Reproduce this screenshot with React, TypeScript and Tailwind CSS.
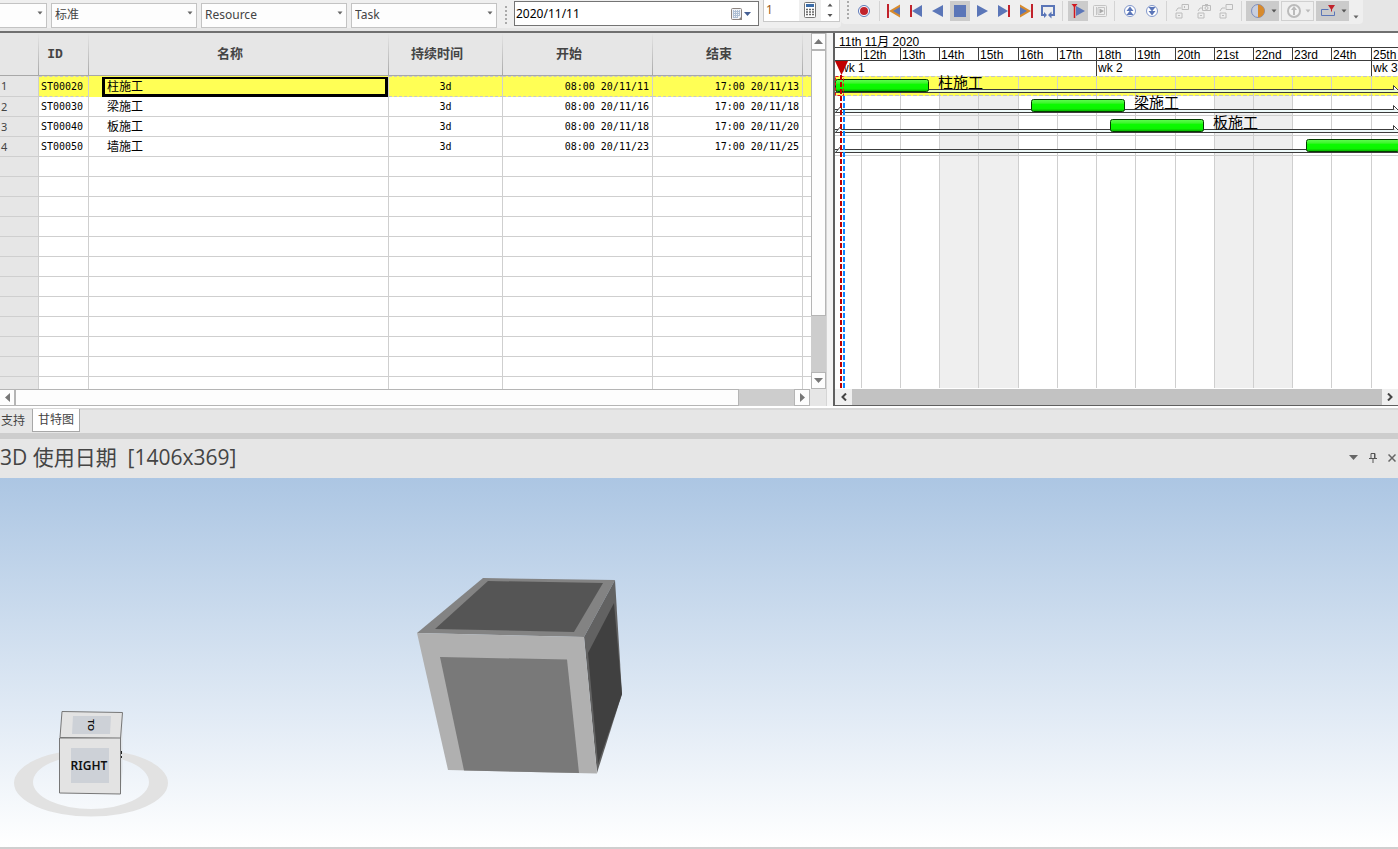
import type { ReactNode } from "react";

type Task = {
  id: string;
  name: string;
  duration: string;
  start: string;
  end: string;
  barX: number;
};

const TASKS: Task[] = [
  { id: "ST00020", name: "柱施工", duration: "3d", start: "08:00 20/11/11", end: "17:00 20/11/13", barX: 0 },
  { id: "ST00030", name: "梁施工", duration: "3d", start: "08:00 20/11/16", end: "17:00 20/11/18", barX: 196 },
  { id: "ST00040", name: "板施工", duration: "3d", start: "08:00 20/11/18", end: "17:00 20/11/20", barX: 275 },
  { id: "ST00050", name: "墙施工", duration: "3d", start: "08:00 20/11/23", end: "17:00 20/11/25", barX: 471 },
];

const DAYS = [
  { label: "12th", x: 26, width: "w-[39px]" },
  { label: "13th", x: 65, width: "w-[39px]" },
  { label: "14th", x: 104, width: "w-[39px]" },
  { label: "15th", x: 143, width: "w-[40px]" },
  { label: "16th", x: 183, width: "w-[39px]" },
  { label: "17th", x: 222, width: "w-[39px]" },
  { label: "18th", x: 261, width: "w-[39px]" },
  { label: "19th", x: 300, width: "w-[40px]" },
  { label: "20th", x: 340, width: "w-[39px]" },
  { label: "21st", x: 379, width: "w-[39px]" },
  { label: "22nd", x: 418, width: "w-[39px]" },
  { label: "23rd", x: 457, width: "w-[39px]" },
  { label: "24th", x: 496, width: "w-[40px]" },
  { label: "25th", x: 536, width: "w-[39px]" },
];

const BAR_WIDTH = 94;
const LAST_LABEL_X = 440;
const EMPTY_ROWS = Array.from({ length: 11 }, (_, i) => i);

const BLUE = "#5b76b8";
const RED = "#c1222b";
const ORANGE = "#d78a2c";

function Select({ label, value, className }: { label: string; value: string; className: string }) {
  return (
    <label className={`relative block h-[25px] ${className}`}>
      <select
        aria-label={label}
        className="h-full w-full appearance-none border border-[#c3c3c3] bg-[#fdfdfd] pl-[3px] text-xs text-[#444]"
      >
        <option>{value}</option>
      </select>
      <svg className="pointer-events-none absolute right-1 top-2.5 h-1 w-1.5" viewBox="0 0 6 4">
        <path d="M0.5 0.5h5L3 3.5z" fill="#666" />
      </svg>
    </label>
  );
}

function Grip() {
  return (
    <svg className="h-[18px] w-0.5 shrink-0" viewBox="0 0 2 18" fill="#aaa">
      {[0, 4, 8, 12, 16].map((y) => (
        <rect key={y} y={y} width="2" height="2" />
      ))}
    </svg>
  );
}

function Separator({ className }: { className: string }) {
  return <div className={`h-5 w-px shrink-0 bg-[#d4d4d4] ${className}`} />;
}

function ToolButton({ label, active, children }: { label: string; active?: boolean; children: ReactNode }) {
  return (
    <button
      type="button"
      aria-label={label}
      className={`flex h-5 w-5 shrink-0 items-center justify-center ${active ? "bg-[#cbcbcb]" : ""}`}
    >
      <svg className="h-4 w-4" viewBox="0 0 16 16" fill="none">
        {children}
      </svg>
    </button>
  );
}

function MenuButton({ label, className, children }: { label: string; className: string; children: ReactNode }) {
  return (
    <button
      type="button"
      aria-label={label}
      className={`flex h-5 w-[33px] shrink-0 items-center justify-between pl-1 pr-0.5 ${className}`}
    >
      <svg className="h-4 w-4" viewBox="0 0 16 16" fill="none">
        {children}
      </svg>
      <svg className="h-1 w-1.5" viewBox="0 0 6 4">
        <path d="M0.5 0.5h5L3 3.5z" fill={label === "Speed" ? "#bbb" : "#555"} />
      </svg>
    </button>
  );
}

function Toolbar() {
  return (
    <div className="flex h-[31px] items-start overflow-hidden bg-[#e6e6e6]">
      <div className="flex h-7 min-w-0 flex-[841] gap-1 rounded-br bg-[#efefef] pt-px">
        <Select label="Filter" value="" className="-ml-1 w-[51px]" />
        <Select label="Layout" value="标准" className="w-[146px]" />
        <Select label="Group" value="Resource" className="w-[146px]" />
        <Select label="Code" value="Task" className="w-[146px]" />
        <div className="flex items-center pl-1">
          <Grip />
        </div>
        <div className="ml-[3px] flex h-[25px] w-[245px] items-center border border-[#747474] bg-white pr-1.5">
          <input
            aria-label="Current date"
            defaultValue="2020/11/11"
            className="min-w-0 flex-1 pl-px text-xs text-black outline-none"
          />
          <svg className="h-[14px] w-[22px]" viewBox="0 0 22 14" fill="none">
            <rect x="1.5" y="1.5" width="10" height="11" rx="1" fill="#f2f4f8" stroke="#8c8480" />
            <path d="M3.5 3v8M5.5 3v8M7.5 3v8M9.5 3v6M3 4.5h7M3 6.5h7M3 8.5h7M3 10.5h5" stroke="#aebfd4" />
            <path d="M12 9v4H8z" fill="#8c8480" />
            <path d="M14 5h7l-3.500 4z" fill="#455f93" />
          </svg>
        </div>
        <div className="-mt-1 flex h-[25px] w-[77px] border border-[#c9c9c9] bg-white">
          <input
            aria-label="Step"
            defaultValue="1"
            className="min-w-0 flex-1 pl-0.5 text-xs text-[#9a5a20] outline-none"
          />
          <div className="flex w-[22px] items-center justify-center bg-[#efefef]">
            <svg className="h-4 w-3" viewBox="0 0 12 16" fill="none">
              <rect x="0.5" y="0.5" width="11" height="15" rx="1" fill="#fff" stroke="#777" />
              <rect x="2" y="2" width="8" height="3" fill="#3c6ca8" />
              <path d="M2 7.500h8M2 10h8M2 12.500h8" stroke="#666" strokeWidth="1.500" strokeDasharray="2 1" />
            </svg>
          </div>
          <div className="flex w-[18px] items-center justify-center">
            <svg className="h-4 w-1.5" viewBox="0 0 6 16" fill="#555">
              <path d="M0.500 4.500h5L3 1.500zM0.500 12h5L3 15z" />
            </svg>
          </div>
        </div>
      </div>

      <div className="flex h-6 min-w-0 flex-[557] items-center">
        <div className="flex h-6 items-start rounded-b bg-[#efefef] pl-1.5 pt-px">
          <Grip />
          <div className="ml-[5px] flex">
            <ToolButton label="Record">
              <circle cx="8" cy="8" r="5.500" fill="#fff" stroke={BLUE} />
              <circle cx="8" cy="8" r="4" fill={RED} />
            </ToolButton>
          </div>
          <Separator className="ml-[5px] mr-1" />
          <div className="flex gap-0.5">
            <ToolButton label="First">
              <path d="M2 1v14" stroke={RED} strokeWidth="2" />
              <path d="M3 8l11-6.500v13z" fill={ORANGE} />
              <path d="M7 8l7-4v8z" fill={BLUE} />
            </ToolButton>
            <ToolButton label="Step back">
              <path d="M3 2v12" stroke={RED} strokeWidth="2" />
              <path d="M4 8l10-6v12z" fill={BLUE} />
            </ToolButton>
            <ToolButton label="Play backwards">
              <path d="M2 8l11-6v12z" fill={BLUE} />
            </ToolButton>
            <ToolButton label="Stop" active>
              <rect x="2" y="2" width="12" height="12" fill={BLUE} />
            </ToolButton>
            <ToolButton label="Play">
              <path d="M14 8L3 2v12z" fill={BLUE} />
            </ToolButton>
            <ToolButton label="Step forward">
              <path d="M13 2v12" stroke={RED} strokeWidth="2" />
              <path d="M12 8L2 2v12z" fill={BLUE} />
            </ToolButton>
            <ToolButton label="Last">
              <path d="M14 1v14" stroke={RED} strokeWidth="2" />
              <path d="M13 8L2 1.500v13z" fill={ORANGE} />
              <path d="M9 8L2 4v8z" fill={BLUE} />
            </ToolButton>
            <ToolButton label="Loop">
              <path d="M5 12H2V3h12v9h-3" stroke={BLUE} strokeWidth="2" />
              <path d="M11.500 8.500v7L8 12zM4 9l3 3-3 3z" fill={BLUE} />
            </ToolButton>
          </div>
          <Separator className="mx-1" />
          <div className="ml-px flex gap-0.5">
            <ToolButton label="Follow date" active>
              <path d="M15 8L6 3v10z" fill={BLUE} />
              <path d="M4.500 1v14" stroke="#d01820" strokeWidth="1.500" />
              <path d="M1.500 1h6L4.500 4.500z" fill="#d01820" />
            </ToolButton>
            <ToolButton label="Preview">
              <rect x="1.500" y="2.500" width="13" height="11" rx="1" stroke="#c4c4c4" />
              <path d="M4.500 4v8M6 4.500h6.500v7H6z" stroke="#c4c4c4" />
              <path d="M7.500 5.500L12 8l-4.500 2.500z" fill="#a8a8a8" />
            </ToolButton>
          </div>
          <Separator className="ml-1 mr-[5px]" />
          <div className="flex gap-0.5">
            <ToolButton label="Raise">
              <circle cx="8" cy="8" r="5.500" fill="#fff" stroke="#8298cc" />
              <path d="M8 3.500L4.500 8h7zM8 7.500L4.500 12h7z" fill={BLUE} />
            </ToolButton>
            <ToolButton label="Lower">
              <circle cx="8" cy="8" r="5.500" fill="#fff" stroke="#8298cc" />
              <path d="M8 8.500L4.500 4h7zM8 12.500L4.500 8h7z" fill={BLUE} />
            </ToolButton>
          </div>
          <Separator className="ml-1 mr-[5px]" />
          <div className="flex gap-0.5">
            <ToolButton label="Play camera">
              <path d="M2 10h6v5H2zM2 8l2-3h3M8 1.500h6.500v5H8zM10.500 3v2M4 12.500h2" stroke="#bcbcbc" />
            </ToolButton>
            <ToolButton label="Capture camera">
              <path d="M2 10h6v5H2zM2 8l2-3h2M6.500 2.500h8v5h-8zM9 1.500h3M4 12.500h2" stroke="#bcbcbc" />
              <circle cx="10.500" cy="5" r="1.500" stroke="#bcbcbc" />
            </ToolButton>
            <ToolButton label="Clear camera">
              <path d="M2 10h6v5H2zM2 8l2-3h3M8 1.500h6.500v5H8zM4 12.500h2" stroke="#bcbcbc" />
            </ToolButton>
          </div>
          <Separator className="ml-[5px] mr-1" />
          <div className="flex gap-0.5">
            <MenuButton label="Shading" className="bg-[#cbcbcb]">
              <circle cx="8" cy="8" r="6.500" fill="#c8cede" stroke="#7d8dbb" />
              <path d="M8 1.500a6.500 6.500 0 010 13z" fill={ORANGE} />
            </MenuButton>
            <MenuButton label="Speed" className="border border-[#d0d0d0]">
              <circle cx="8" cy="8" r="6" fill="#f4f4f4" stroke="#bbb" strokeWidth="2" />
              <path d="M7 12V7H5l3-4 3 4H9v5z" fill="#bbb" />
            </MenuButton>
            <MenuButton label="Marker" className="bg-[#cbcbcb]">
              <path d="M8.500 6.500h-7v6h13v-4" stroke={BLUE} />
              <path d="M8 2h7l-3 4.500v2h-1v-2z" fill={RED} />
            </MenuButton>
          </div>
          <svg className="mx-1 mt-3.5 h-1 w-1.5" viewBox="0 0 6 4">
            <path d="M0.500 0.500h5L3 3.500z" fill="#666" />
          </svg>
        </div>
      </div>
    </div>
  );
}

const HEAD_CELL =
  "h-[43px] border-b border-[#a8a8a8] bg-[#e6e6e6] bg-[linear-gradient(to_bottom,#e6e6e6,#a8a8a8)] bg-[length:1px_100%] bg-right bg-no-repeat pl-0 pr-[18px] text-center text-[13px] font-bold text-[#444]";
const CELL = "overflow-hidden whitespace-nowrap border-b border-r border-[#cfcfcf] p-0";

function TaskTable() {
  return (
    <div className="flex min-w-0 flex-col border-r border-[#d5d5d5]">
      <div className="flex">
        <table className="min-w-0 flex-1 table-fixed border-separate border-spacing-0 bg-white font-['DejaVu_Sans_Mono','Noto_Sans_CJK_SC',monospace] text-[10px] leading-4 text-black">
          <colgroup>
            <col className="w-[39px]" />
            <col className="w-[50px]" />
            <col />
            <col className="w-[114px]" />
            <col className="w-[150px]" />
            <col className="w-[150px]" />
            <col className="w-2" />
          </colgroup>
          <thead>
            <tr>
              <th className={HEAD_CELL} aria-label="Row" />
              <th className={HEAD_CELL}>
                <span className="font-['Liberation_Mono',monospace]">ID</span>
              </th>
              <th className={HEAD_CELL}>名称</th>
              <th className={HEAD_CELL}>持续时间</th>
              <th className={HEAD_CELL}>开始</th>
              <th className={HEAD_CELL}>结束</th>
              <th className="border-b border-[#a8a8a8] bg-[#e6e6e6]" aria-label="More" />
            </tr>
          </thead>
          <tbody>
            {TASKS.map((task, i) => {
              const selected = i === 0;
              const tone = selected
                ? "border-t border-t-[#c8c8c8] border-b-[#c8c8c8] bg-[#ffff55] [border-bottom-style:dashed] [border-top-style:dashed]"
                : "";
              return (
                <tr key={task.id} className={selected ? "h-[21px]" : "h-5"}>
                  <td className={`${CELL} bg-[#e6e6e6] pl-px font-['Noto_Sans',sans-serif] text-[11px] text-[#444]`}>
                    {i + 1}
                  </td>
                  <td className={`${CELL} ${tone} pl-0.5`}>{task.id}</td>
                  <td
                    className={
                      selected
                        ? "overflow-hidden whitespace-nowrap border-r border-[#cfcfcf] bg-[#ffff55] p-0 pl-[13px]"
                        : `${CELL} pl-[18px]`
                    }
                  >
                    <div
                      className={
                        selected
                          ? "h-5 border-[3px] border-t-2 border-black pl-0.5 text-xs leading-4"
                          : "text-xs leading-4"
                      }
                    >
                      {task.name}
                    </div>
                  </td>
                  <td className={`${CELL} ${tone} text-center`}>{task.duration}</td>
                  <td className={`${CELL} ${tone} pr-[3px] text-right`}>{task.start}</td>
                  <td className={`${CELL} ${tone} pr-[3px] text-right`}>{task.end}</td>
                  <td className={`${CELL} ${tone} border-r-0`} />
                </tr>
              );
            })}
            {EMPTY_ROWS.map((row) => (
              <tr key={row} className="h-5">
                <td className={`${CELL} bg-[#e6e6e6]`} />
                <td className={CELL} />
                <td className={CELL} />
                <td className={CELL} />
                <td className={CELL} />
                <td className={CELL} />
                <td className={`${CELL} border-r-0`} />
              </tr>
            ))}
            <tr className="h-3">
              <td className={`${CELL} border-b-0 bg-[#e6e6e6]`} />
              <td className={`${CELL} border-b-0`} />
              <td className={`${CELL} border-b-0`} />
              <td className={`${CELL} border-b-0`} />
              <td className={`${CELL} border-b-0`} />
              <td className={`${CELL} border-b-0`} />
              <td />
            </tr>
          </tbody>
        </table>
        <div className="flex w-[15px] shrink-0 flex-col bg-[#cdcdcd]">
          <button
            type="button"
            aria-label="Scroll up"
            className="flex h-[17px] items-center justify-center border border-[#b5b5b5] bg-[#fdfdfd]"
          >
            <svg className="h-[5px] w-[9px]" viewBox="0 0 9 5">
              <path d="M0 5h9L4.500 0z" fill="#777" />
            </svg>
          </button>
          <div className="h-[266px] border border-[#b5b5b5] bg-[#fdfdfd]" />
          <div className="flex-1" />
          <button
            type="button"
            aria-label="Scroll down"
            className="flex h-[17px] items-center justify-center border border-[#b5b5b5] bg-[#fdfdfd]"
          >
            <svg className="h-[5px] w-[9px]" viewBox="0 0 9 5">
              <path d="M0 0h9L4.500 5z" fill="#777" />
            </svg>
          </button>
        </div>
      </div>
      <div className="flex h-[17px] bg-[#e6e6e6]">
        <button
          type="button"
          aria-label="Scroll left"
          className="flex w-[15px] items-center justify-center border-y border-r border-[#b5b5b5] bg-[#fdfdfd]"
        >
          <svg className="h-[9px] w-[5px]" viewBox="0 0 5 9">
            <path d="M5 0v9L0 4.500z" fill="#777" />
          </svg>
        </button>
        <div className="flex-[724] border border-[#b5b5b5] bg-[#fdfdfd]" />
        <div className="flex-[55] bg-[#cdcdcd]" />
        <button
          type="button"
          aria-label="Scroll right"
          className="mr-4 flex w-4 items-center justify-center border border-[#b5b5b5] bg-[#fdfdfd]"
        >
          <svg className="h-[9px] w-[5px]" viewBox="0 0 5 9">
            <path d="M0 0v9l5-4.500z" fill="#777" />
          </svg>
        </button>
      </div>
    </div>
  );
}

function GanttBody() {
  return (
    <svg className="relative min-h-0 w-full flex-1 overflow-visible" role="img" aria-label="Gantt">
      <defs>
        <linearGradient id="bar" x1="0" y1="0" x2="0" y2="1">
          <stop offset="0" stopColor="#5fff50" />
          <stop offset="0.3" stopColor="#3df52c" />
          <stop offset="0.4" stopColor="#0cfb00" />
          <stop offset="0.75" stopColor="#0cf500" />
          <stop offset="1" stopColor="#07a800" />
        </linearGradient>
      </defs>
      <rect x="104" y="0" width="79" height="100%" fill="#efefef" />
      <rect x="379" y="0" width="78" height="100%" fill="#efefef" />
      <rect x="0" y="0" width="100%" height="20" fill="#ffff55" />
      {DAYS.map((day) => (
        <rect key={day.label} x={day.x} y="0" width="1" height="100%" fill="#cfcfcf" />
      ))}
      <line x1="0" x2="100%" y1="0.5" y2="0.5" stroke="#c4c4c4" strokeDasharray="4 2" />
      <line x1="0" x2="100%" y1="19.5" y2="19.5" stroke="#c4c4c4" strokeDasharray="4 2" />
      {[39, 59, 79].map((y) => (
        <rect key={y} x="0" y={y} width="100%" height="1" fill="#cfcfcf" />
      ))}
      {TASKS.map((task, i) => {
        const y = i * 20;
        return (
          <g key={task.id}>
            <rect x="-1" y={y + 13} width="200%" height="4" fill="#3c3c3c" />
            <rect x="-1" y={y + 14} width="200%" height="2" fill={i === 0 ? "#e9ffc9" : "#eefafa"} />
            <path d={`M0.5 ${y + 16.5}l6-7v4M558.500 ${y + 13.5}v-4l5 5`} fill="#fff" stroke="#3c3c3c" />
            <rect
              x={task.barX + 0.5}
              y={y + 3.5}
              width={BAR_WIDTH - 1}
              height="12"
              rx="2"
              fill="url(#bar)"
              stroke="#053d00"
            />
            {task.barX < LAST_LABEL_X && (
              <text
                x={task.barX + 103}
                y={y + 12}
                fontSize="15"
                fill="#000"
                className="font-['Noto_Sans_CJK_SC',sans-serif]"
              >
                {task.name}
              </text>
            )}
          </g>
        );
      })}
      <rect x="0.5" y="0.5" width="8" height="19" fill="none" stroke="#f01414" strokeDasharray="3 2" />
      <line x1="9" x2="9" y1="20" y2="100%" stroke="#0a84ff" strokeWidth="2" strokeDasharray="5 2" />
      <line x1="6" x2="6" y1="-1" y2="100%" stroke="#c00000" strokeWidth="2" strokeDasharray="5 2" />
      <path d="M0 -15h13l-6.500 14z" fill="#c00000" />
    </svg>
  );
}

function GanttPane() {
  return (
    <div className="flex min-w-0 flex-col overflow-hidden border-b border-l-2 border-[#606060] bg-white font-['Liberation_Sans','Noto_Sans_CJK_SC',sans-serif] text-xs leading-[14px] text-black">
      <div className="h-[15px] whitespace-nowrap border-b border-[#3c3c3c] pl-1 pt-0.5">11th 11月 2020</div>
      <div className="flex h-[13px] border-b border-[#3c3c3c]">
        <div className="w-[26px] shrink-0" />
        {DAYS.map((day) => (
          <div key={day.label} className={`shrink-0 border-l border-[#3c3c3c] pl-px ${day.width}`}>
            {day.label}
          </div>
        ))}
      </div>
      <div className="flex h-[15px]">
        <div className="w-[261px] shrink-0 pl-[5px]">wk 1</div>
        <div className="w-[275px] shrink-0 border-l border-[#3c3c3c] pl-px">wk 2</div>
        <div className="shrink-0 border-l border-[#3c3c3c] pl-px">wk 3</div>
      </div>
      <div className="flex min-h-0 flex-1 overflow-visible pb-px">
        <GanttBody />
      </div>
      <div className="relative flex h-4 bg-[#efefef]">
        <button type="button" aria-label="Earlier" className="flex w-[17px] items-center justify-center">
          <svg className="h-2 w-1.5" viewBox="0 0 6 8" fill="none">
            <path d="M5 0.500L1.500 4 5 7.500" stroke="#444" strokeWidth="2" />
          </svg>
        </button>
        <div className="flex-1 bg-[#c2c2c2]" />
        <button type="button" aria-label="Later" className="flex w-4 items-center justify-center">
          <svg className="h-2 w-1.5" viewBox="0 0 6 8" fill="none">
            <path d="M1 0.500L4.500 4 1 7.500" stroke="#444" strokeWidth="2" />
          </svg>
        </button>
      </div>
    </div>
  );
}

function Viewport() {
  return (
    <main className="flex min-h-[369px] flex-1 border-b-2 border-[#cfcfcf] bg-[linear-gradient(to_bottom,#acc6e3,#ffffff)]">
      <svg className="w-full" role="img" aria-label="3D">
        <g shapeRendering="geometricPrecision">
          <path d="M417 155L483 100 615 102 584 159z" fill="#838383" />
          <path d="M435 151L488 103 603 105 574 154z" fill="#555" />
          <path d="M584 159L615 102 622 216 597 295z" fill="#626262" />
          <path d="M588 175L614 125 622 216 598 286z" fill="#404040" />
          <path d="M417 155L584 159 597 295.500 448 292z" fill="#b0b0b0" />
          <path d="M440 179L567 181.500 579 295 464 292.500z" fill="#797979" />
        </g>
        <path
          fillRule="evenodd"
          fill="#e2e2e2"
          d="M14 305a77 33.500 0 10154 0a77 33.500 0 10-154 0zM33 304a58 27 0 10116 0a58 27 0 10-116 0z"
        />
        <path d="M120.500 261l2-27v59l-2 23z" fill="#e0e4e8" />
        <path d="M62 233.500L122.500 234.500 120.500 260.500 60 259.500z" fill="#e3e3e3" stroke="#777" />
        <path d="M59.500 260h61v56l-61-1z" fill="#e3e3e3" stroke="#777" />
        <path d="M73 238h38l-1 18H72z" fill="#cdd1d7" />
        <rect x="71" y="270" width="38" height="35" fill="#cdd1d7" />
        <path d="M121.500 273v3M121.500 278v2" stroke="#222" />
        <text
          x="89"
          y="292"
          textAnchor="middle"
          fontSize="12"
          fill="#111"
          className="font-['Noto_Sans',sans-serif] font-semibold"
        >
          RIGHT
        </text>
        <text
          transform="translate(88 247) rotate(90)"
          textAnchor="middle"
          fontSize="9"
          fill="#111"
          className="font-['Noto_Sans',sans-serif] font-semibold"
        >
          TO
        </text>
      </svg>
    </main>
  );
}

export default function App() {
  return (
    <div className="flex min-h-screen flex-col overflow-hidden bg-[#e6e6e6] font-['Noto_Sans','Noto_Sans_CJK_SC',sans-serif]">
      <Toolbar />
      <div className="border-b-2 border-[#d8d8d8]">
        <div className="grid grid-cols-[827fr_571fr] gap-0 border-b-2 border-t-2 border-b-white border-t-[#707070]">
          <TaskTable />
          <div className="flex min-w-0 bg-[#f4f4f4] pl-1.5">
            <div className="grid min-w-0 flex-1">
              <GanttPane />
            </div>
          </div>
        </div>
      </div>
      <nav className="-mt-px flex h-6 items-start text-xs text-[#444]">
        <button type="button" className="h-[23px] w-8 whitespace-nowrap pl-px text-left">
          支持
        </button>
        <button
          type="button"
          className="h-[23px] w-12 whitespace-nowrap border border-t-0 border-[#a8a8a8] bg-white text-center"
        >
          甘特图
        </button>
      </nav>
      <div className="h-1.5 bg-[#cdcdcd]" />
      <header className="flex h-[39px] items-center justify-between pb-1">
        <h1 className="whitespace-pre font-['Open_Sans','Noto_Sans_CJK_SC',sans-serif] text-[21px] leading-8 text-[#444]">
          {"3D 使用日期  [1406x369]"}
        </h1>
        <div className="flex items-center gap-[11px] pr-0.5 pt-0.5">
          <button type="button" aria-label="Menu">
            <svg className="h-[5px] w-[9px]" viewBox="0 0 9 5">
              <path d="M0 0h9L4.500 5z" fill="#666" />
            </svg>
          </button>
          <button type="button" aria-label="Pin">
            <svg className="h-2.5 w-2" viewBox="0 0 8 10" fill="none">
              <path d="M2 5.500V0.500h4v5M0 5.500h8M4 6v4" stroke="#555" />
              <path d="M5.500 0.500v5" stroke="#555" />
            </svg>
          </button>
          <button type="button" aria-label="Close">
            <svg className="h-2 w-2" viewBox="0 0 8 8" fill="none">
              <path d="M0.500 0.500l7 7M7.500 0.500l-7 7" stroke="#666" strokeWidth="1.500" />
            </svg>
          </button>
        </div>
      </header>
      <Viewport />
    </div>
  );
}
